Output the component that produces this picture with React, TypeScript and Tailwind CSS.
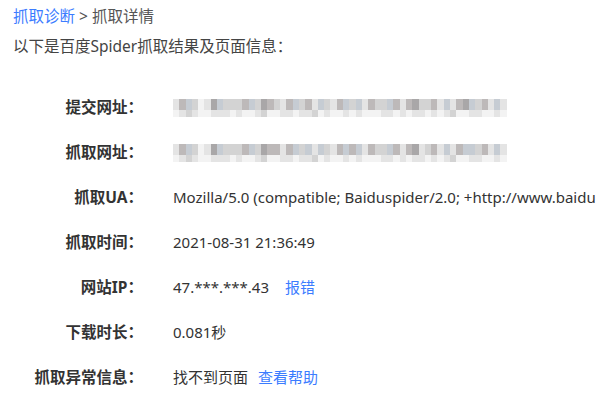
import React from "react";

const SHADES = [
  "bg-[#f3f3f3]",
  "bg-[#e4e4e4]",
  "bg-[#d3d3d3]",
  "bg-[#bdb9b9]",
  "bg-[#c6ccd3]",
  "bg-[#a9a7a8]",
];

// pixelated (mosaic) url, one digit per block
const URL_TOP = "13420154222342532134231421342413224313522314135423141";
const URL_BOT = "01210011101001200110112010010100011010110101200110010";
const URL2_TOP = "13420154222342533134241421343413224313512314134423141";

function Mosaic({ top, bot }: { top: string; bot: string }) {
  return (
    <div className="flex flex-col">
      <div className="flex h-[11px]">
        {top.split("").map((c, i) => (
          <span key={i} className={`w-[6.3px] h-full ${SHADES[Number(c)]}`} />
        ))}
      </div>
      <div className="flex h-[7px]">
        {bot.split("").map((c, i) => (
          <span key={i} className={`w-[6.3px] h-full ${SHADES[Number(c)]}`} />
        ))}
      </div>
    </div>
  );
}

function Row({ label, children }: { label: string; children: React.ReactNode }) {
  return (
    <div className="flex items-center h-[45px]">
      <div className="w-[143px] shrink-0 text-right font-bold text-[15.5px] text-[#333]">{label}</div>
      <div className="pl-[30px] flex items-center whitespace-nowrap overflow-hidden">{children}</div>
    </div>
  );
}

export default function App() {
  return (
    <div
      className="w-[600px] h-[407px] overflow-hidden bg-white text-[15px] text-[#333]"
      style={{ fontFamily: '"Noto Sans", "Noto Sans CJK SC", sans-serif' }}
    >
      <div className="pl-[13px] pt-[5px] leading-[22px] text-[15.5px]">
        <a className="text-[#3b7cff]">抓取诊断</a>
        <span className="text-[#555]"> &gt; 抓取详情</span>
      </div>
      <div className="pl-[13px] pt-[8px] leading-[22px] text-[15.5px] text-[#444]">以下是百度Spider抓取结果及页面信息：</div>

      <div className="pt-[28px]">
        <Row label="提交网址：">
          <Mosaic top={URL_TOP} bot={URL_BOT} />
        </Row>
        <Row label="抓取网址：">
          <Mosaic top={URL2_TOP} bot={URL_BOT} />
        </Row>
        <Row label="抓取UA：">Mozilla/5.0 (compatible; Baiduspider/2.0; +http://www.baidu</Row>
        <Row label="抓取时间：">2021-08-31 21:36:49</Row>
        <Row label="网站IP：">
          47.***.***.43
          <a className="ml-[16px] text-[#3b7cff]">报错</a>
        </Row>
        <Row label="下载时长：">0.081秒</Row>
        <Row label="抓取异常信息：">
          找不到页面
          <a className="ml-[10px] text-[#3b7cff]">查看帮助</a>
        </Row>
      </div>
    </div>
  );
}
